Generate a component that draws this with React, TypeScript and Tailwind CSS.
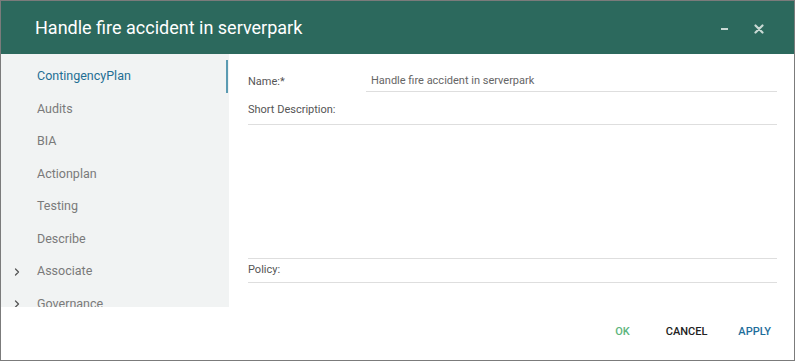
import { ChevronRight } from "lucide-react";

const navItems = [
  { label: "ContingencyPlan", active: true },
  { label: "Audits" },
  { label: "BIA" },
  { label: "Actionplan" },
  { label: "Testing" },
  { label: "Describe" },
  { label: "Associate", expandable: true },
  { label: "Governance", expandable: true },
];

export default function App() {
  return (
    <div className="w-[796px] h-[362px] bg-white font-['Roboto',sans-serif]">
      <div className="w-[795px] h-[361px] border border-[#7b7b7b] flex flex-col">
        {/* Header */}
        <div className="h-[53px] shrink-0 bg-[#2c695d] flex items-center pl-[34px] pr-[30px]">
          <h1 className="flex-1 text-[18px] text-white leading-none">Handle fire accident in serverpark</h1>
          <div className="flex items-center gap-[26px] mt-[2px]">
            <span className="block w-[7px] h-[2px] bg-[#c9d9d4]"></span>
            <svg width="10" height="10" viewBox="0 0 10 10" className="text-[#c9d9d4]">
              <path d="M1.5 1.5 L8.5 8.5 M8.5 1.5 L1.5 8.5" stroke="currentColor" strokeWidth="2.2" strokeLinecap="round" />
            </svg>
          </div>
        </div>

        {/* Body */}
        <div className="h-[253px] shrink-0 flex">
          <div className="w-[228px] shrink-0 bg-[#f1f3f3] overflow-hidden pt-[6px]">
            {navItems.map((item) => (
              <div key={item.label} className="relative h-[32.6px] flex items-center">
                <span className="w-[36px] shrink-0 flex justify-center pr-[5px]">
                  {item.expandable && <ChevronRight size={12} strokeWidth={2.5} className="text-[#555]" />}
                </span>
                <span className={item.active ? "text-[12.5px] text-[#1f6f94]" : "text-[12.5px] text-[#7a7a7a]"}>
                  {item.label}
                </span>
                {item.active && <span className="absolute right-[1px] top-0 h-full w-[2px] bg-[#5b9bb2]"></span>}
              </div>
            ))}
          </div>

          <div className="flex-1 pl-[19px] pr-[17px] pt-[16px] text-[11px] text-[#555]">
            <div className="flex items-end h-[22px]">
              <span className="w-[118px] pb-[2px]">Name:*</span>
              <div className="flex-1 border-b border-[#dedede] pl-[5px] pb-[2px] text-[#666]">Handle fire accident in serverpark</div>
            </div>
            <div className="h-[33px] flex items-end border-b border-[#dedede] pb-[6px]">Short Description:</div>
            <div className="h-[134px] border-b border-[#dedede]"></div>
            <div className="h-[24px] flex items-center border-b border-[#dedede]">Policy:</div>
          </div>
        </div>

        {/* Footer */}
        <div className="flex-1 flex items-center justify-end pr-[23px] pb-[2px] text-[11px] font-medium">
          <button className="text-[#5db57d] mr-[36px]">OK</button>
          <button className="text-[#222] mr-[31px]">CANCEL</button>
          <button className="text-[#1e6e9b]">APPLY</button>
        </div>
      </div>
    </div>
  );
}
